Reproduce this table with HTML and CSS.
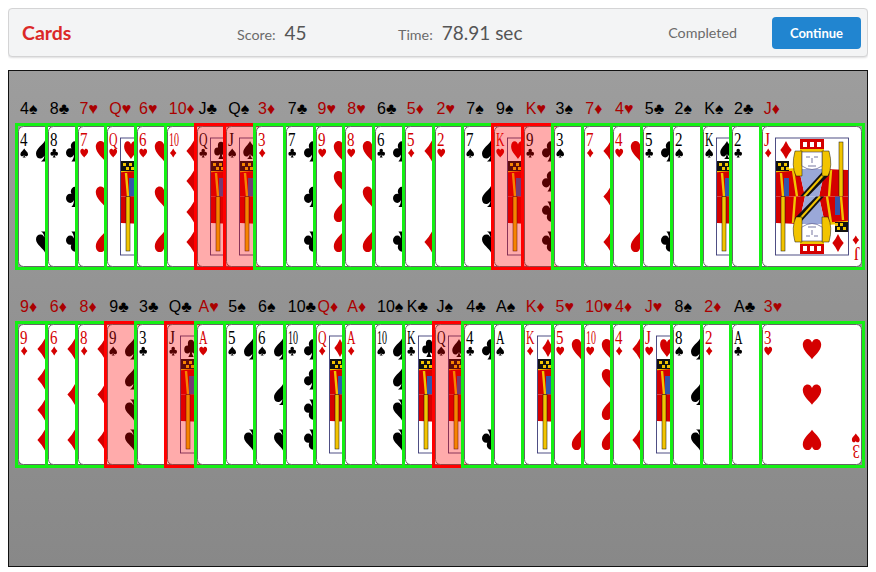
FILE: index.html
```html
<!DOCTYPE html>
<html lang="en">
<head>
<meta charset="utf-8">
<title>Cards</title>
<link rel="stylesheet" href="styles.css">
</head>
<body>
<header class="bar">
  <div class="title">Cards</div>
  <div class="stat score"><span class="k">Score:</span><span class="v">45</span></div>
  <div class="stat time"><span class="k">Time:</span><span class="v">78.91 sec</span></div>
  <div class="status">Completed</div>
  <button class="btn">Continue</button>
</header>
<main class="table">
  <section class="row">
    <div class="labels">
      <span class="lb">4♠</span><span class="lb">8♣</span><span class="lb red">7♥</span><span class="lb red">Q♥</span><span class="lb red">6♥</span><span class="lb red">10♦</span><span class="lb">J♣</span><span class="lb">Q♠</span><span class="lb red">3♦</span><span class="lb">7♣</span><span class="lb red">9♥</span><span class="lb red">8♥</span><span class="lb">6♣</span><span class="lb red">5♦</span><span class="lb red">2♥</span><span class="lb">7♠</span><span class="lb">9♠</span><span class="lb red">K♥</span><span class="lb">3♠</span><span class="lb red">7♦</span><span class="lb red">4♥</span><span class="lb">5♣</span><span class="lb">2♠</span><span class="lb">K♠</span><span class="lb">2♣</span><span class="lb red">J♦</span>
    </div>
    <div class="cards">
      <div class="card" data-c="4S"></div><div class="card" data-c="8C"></div><div class="card" data-c="7H"></div><div class="card" data-c="QH"></div><div class="card" data-c="6H"></div><div class="card" data-c="10D"></div><div class="card bad" data-c="QC"></div><div class="card bad" data-c="JS"></div><div class="card" data-c="3D"></div><div class="card" data-c="7C"></div><div class="card" data-c="9H"></div><div class="card" data-c="8H"></div><div class="card" data-c="6C"></div><div class="card" data-c="5D"></div><div class="card" data-c="2H"></div><div class="card" data-c="7S"></div><div class="card bad" data-c="KH"></div><div class="card bad" data-c="9C"></div><div class="card" data-c="3S"></div><div class="card" data-c="7D"></div><div class="card" data-c="4H"></div><div class="card" data-c="5C"></div><div class="card" data-c="2S"></div><div class="card" data-c="KS"></div><div class="card" data-c="2C"></div><div class="card" data-c="JD"></div>
    </div>
  </section>
  <section class="row">
    <div class="labels">
      <span class="lb red">9♦</span><span class="lb red">6♦</span><span class="lb red">8♦</span><span class="lb">9♣</span><span class="lb">3♣</span><span class="lb">Q♣</span><span class="lb red">A♥</span><span class="lb">5♠</span><span class="lb">6♠</span><span class="lb">10♣</span><span class="lb red">Q♦</span><span class="lb red">A♦</span><span class="lb">10♠</span><span class="lb">K♣</span><span class="lb">J♠</span><span class="lb">4♣</span><span class="lb">A♠</span><span class="lb red">K♦</span><span class="lb red">5♥</span><span class="lb red">10♥</span><span class="lb red">4♦</span><span class="lb red">J♥</span><span class="lb">8♠</span><span class="lb red">2♦</span><span class="lb">A♣</span><span class="lb red">3♥</span>
    </div>
    <div class="cards">
      <div class="card" data-c="9D"></div><div class="card" data-c="6D"></div><div class="card" data-c="8D"></div><div class="card bad" data-c="9S"></div><div class="card" data-c="3C"></div><div class="card bad" data-c="JC"></div><div class="card" data-c="AH"></div><div class="card" data-c="5S"></div><div class="card" data-c="6S"></div><div class="card" data-c="10C"></div><div class="card" data-c="QD"></div><div class="card" data-c="AD"></div><div class="card" data-c="10S"></div><div class="card" data-c="KC"></div><div class="card bad" data-c="QS"></div><div class="card" data-c="4C"></div><div class="card" data-c="AS"></div><div class="card" data-c="KD"></div><div class="card" data-c="5H"></div><div class="card" data-c="10H"></div><div class="card" data-c="4D"></div><div class="card" data-c="JH"></div><div class="card" data-c="8S"></div><div class="card" data-c="2D"></div><div class="card" data-c="AC"></div><div class="card" data-c="3H"></div>
    </div>
  </section>
</main>
<script src="script.js"></script>
</body>
</html>
```
FILE: styles.css
```css
html, body { margin: 0; padding: 0; }
body {
  margin: 8px;
  font-family: Lato, "Liberation Sans", sans-serif;
  background: #fff;
}
.bar {
  display: flex;
  align-items: center;
  height: 49px;
  box-sizing: border-box;
  padding: 0 6px 0 13px;
  background: #f3f4f5;
  border: 1px solid #d4d4d5;
  border-radius: 4px;
  box-shadow: 0 1px 2px rgba(34, 36, 38, 0.15);
}
.title {
  width: 215px;
  flex: none;
  color: #db2828;
  font-weight: 700;
  font-size: 19.5px;
}
.stat { flex: none; color: #555; }
.score { width: 161px; }
.time { flex: 1; }
.k { font-size: 14.3px; color: #6b6b6b; }
.v { font-size: 19px; margin-left: 9px; color: #555; }
.status { font-size: 14.3px; color: #6b6b6b; margin-right: 35px; }
.btn {
  flex: none;
  width: 89px;
  height: 32px;
  border: 0;
  border-radius: 4px;
  background: #2185d0;
  color: #fff;
  font-family: Lato, "Liberation Sans", sans-serif;
  font-weight: 700;
  font-size: 13px;
  padding: 0;
}
.table {
  display: block;
  margin-top: 13px;
  height: 497px;
  box-sizing: border-box;
  border: 1px solid #111;
  padding: 0 6px;
  background: linear-gradient(#9d9d9d, #888);
}
.row { margin-top: 28px; }
.row + .row { margin-top: 27px; }
.labels {
  display: flex;
  height: 20px;
  line-height: 20px;
  font-family: "Liberation Sans", Arial, sans-serif;
  font-size: 16px;
  white-space: nowrap;
  color: #000;
}
.lb {
  flex: none;
  width: 29.76px;
  box-sizing: border-box;
  padding-left: 5px;
}
.lb.red { color: #a00; }
.cards {
  display: flex;
  margin-top: 4px;
}
.card {
  position: relative;
  flex: none;
  width: 100px;
  height: 141px;
  border: 3px solid #14f014;
}
.card + .card { margin-left: -76.24px; }
.card svg { display: block; }
.card.bad { border-color: #f00; }
.card.bad::after {
  content: "";
  position: absolute;
  inset: 0;
  background: rgba(255, 0, 0, 0.33);
}
```
FILE: script.js
```js
(function () {
  var RED = '#d40000';
  var COL = { S: '#000', C: '#000', H: RED, D: RED };
  var P = {
    H: 'M50 97 C41 82 4 60 4 31 C4 14 15 4 28 4 C39 4 47 11 50 21 C53 11 61 4 72 4 C85 4 96 14 96 31 C96 60 59 82 50 97Z',
    D: 'M50 2 Q66 30 88 50 Q66 70 50 98 Q34 70 12 50 Q34 30 50 2Z',
    S: 'M50 2 C58 20 95 38 95 62 C95 78 82 86 70 84 C61 83 56 77 53 71 C54 84 59 92 70 98 L30 98 C41 92 46 84 47 71 C44 77 39 83 30 84 C18 86 5 78 5 62 C5 38 42 20 50 2Z',
    C: 'M29 27a21 21 0 1 1 42 0a21 21 0 1 1 -42 0Z M5 58a21 21 0 1 1 42 0a21 21 0 1 1 -42 0Z M53 58a21 21 0 1 1 42 0a21 21 0 1 1 -42 0Z M38 38H62V62H38Z M54 60 Q55 86 68 98 L32 98 Q45 86 46 60Z'
  };
  function pip(s, cx, cy, w, h, flip) {
    return '<path d="' + P[s] + '" fill="' + COL[s] + '" transform="translate(' + cx + ' ' + cy + ')' +
      (flip ? ' rotate(180)' : '') + ' scale(' + (w / 100) + ' ' + (h / 100) + ') translate(-50 -50)"/>';
  }
  function idx(r, s) {
    var len = { '10': 10, 'Q': 8.5, 'K': 8.5, 'A': 8.5, 'J': 6 }[r] || 7.5;
    var t = '<text x="2" y="20" font-size="18.5" textLength="' + len + '" lengthAdjust="spacingAndGlyphs">' + r + '</text>';
    return '<g fill="' + COL[s] + '" font-family="Liberation Serif, serif">' + t + pip(s, 6.2, 27, 8.5, 9.5) + '</g>';
  }
  var L = 27, C = 50, R = 73, T = 25, B = 116, M = 70.5;
  var four = [[L, T], [R, T], [L, B], [R, B]];
  var six = four.concat([[L, M], [R, M]]);
  var nine = [[L, 25], [L, 55], [L, 86], [L, 116], [R, 25], [R, 55], [R, 86], [R, 116]];
  var LAY = {
    'A': [[C, M]],
    '2': [[C, T], [C, B]],
    '3': [[C, T], [C, M], [C, B]],
    '4': four,
    '5': four.concat([[C, M]]),
    '6': six,
    '7': six.concat([[C, 47.75]]),
    '8': six.concat([[C, 47.75], [C, 93.25]]),
    '9': nine.concat([[C, M]]),
    '10': nine.concat([[C, 40], [C, 101]])
  };
  function court(s, r) {
    var Y = '#f2c400', K = '#111', Bl = '#3355aa', LB = '#9aa8d8', F = '#3c3c78';
    var top =
      pip(s, 24, 24, 15, 19) +
      '<path d="M14 44 L37 43 L43 70.5 L14 70.5Z" fill="' + RED + '"/>' +
      '<path d="M63 43 L86 44 L86 70.5 L57 70.5Z" fill="' + RED + '"/>' +
      '<path d="M37 43 H63 L57 70.5 H43Z" fill="' + LB + '"/>' +
      '<path d="M38 70.5 L62 44 L68 48 L46 70.5Z" fill="' + K + '"/>' +
      '<path d="M42 70.5 L64 46" stroke="' + Y + '" stroke-width="2"/>' +
      '<path d="M14 45 L37 43 M31 44 L35 70.5 M19 47 L21 70.5 M69 44 L67 70.5" stroke="' + Y + '" stroke-width="2.4" fill="none"/>' +
      '<rect x="14" y="35" width="13" height="10" fill="' + K + '"/>' +
      '<path d="M16 37h3v3h-3z M22 37h3v3h-3z M19 41h3v3h-3z M24 41h3v3h-3z" fill="' + Y + '"/>' +
      '<rect x="22" y="52" width="5" height="18.5" fill="' + Bl + '"/>' +
      '<path d="M38 13 H62 V24 H38Z" fill="' + RED + '"/>' +
      '<path d="M41 16h4v5h-4z M48 16h4v5h-4z M55 16h4v5h-4z" fill="#fff"/>' +
      '<rect x="38" y="23" width="24" height="3" fill="' + Y + '"/>' +
      '<path d="M33 25 Q29 40 34 50 L40 50 L40 25Z" fill="' + Y + '" stroke="' + K + '" stroke-width=".5"/>' +
      '<path d="M67 25 Q71 40 66 50 L60 50 L60 25Z" fill="' + Y + '" stroke="' + K + '" stroke-width=".5"/>' +
      '<path d="M40 26 H60 V40 Q50 47 40 40Z" fill="#fff" stroke="' + F + '" stroke-width=".6"/>' +
      '<path d="M44 31h4 M52 31h4 M50 32v5 M46 40h8" stroke="' + F + '" stroke-width=".7" fill="none"/>' +
      '<rect x="77" y="16" width="4" height="54.5" fill="' + Y + '" stroke="' + K + '" stroke-width=".5"/>';
    return '<rect x="13.5" y="12" width="73" height="117" fill="#fff"/>' +
      '<g>' + top + '</g><g transform="rotate(180 50 70.5)">' + top + '</g>' +
      '<rect x="13.5" y="12" width="73" height="117" fill="none" stroke="' + F + '" stroke-width="0.9"/>';
  }
  function cardSVG(code) {
    var r = code.slice(0, -1), s = code.slice(-1);
    var body = '<rect x=".5" y=".5" width="99" height="140" rx="5" fill="#fff" stroke="#666"/>';
    if (r === 'J' || r === 'Q' || r === 'K') {
      body += court(s, r);
    } else {
      var big = r === 'A';
      LAY[r].forEach(function (p) {
        body += pip(s, p[0], p[1], big ? 34 : 20, big ? 38 : 22, p[1] > M + 0.1);
      });
    }
    body += idx(r, s) + '<g transform="rotate(180 50 70.5)">' + idx(r, s) + '</g>';
    return '<svg width="100" height="141" viewBox="0 0 100 141" xmlns="http://www.w3.org/2000/svg">' + body + '</svg>';
  }
  var cards = document.querySelectorAll('.card');
  for (var i = 0; i < cards.length; i++) {
    cards[i].innerHTML = cardSVG(cards[i].getAttribute('data-c'));
  }
})();
```
